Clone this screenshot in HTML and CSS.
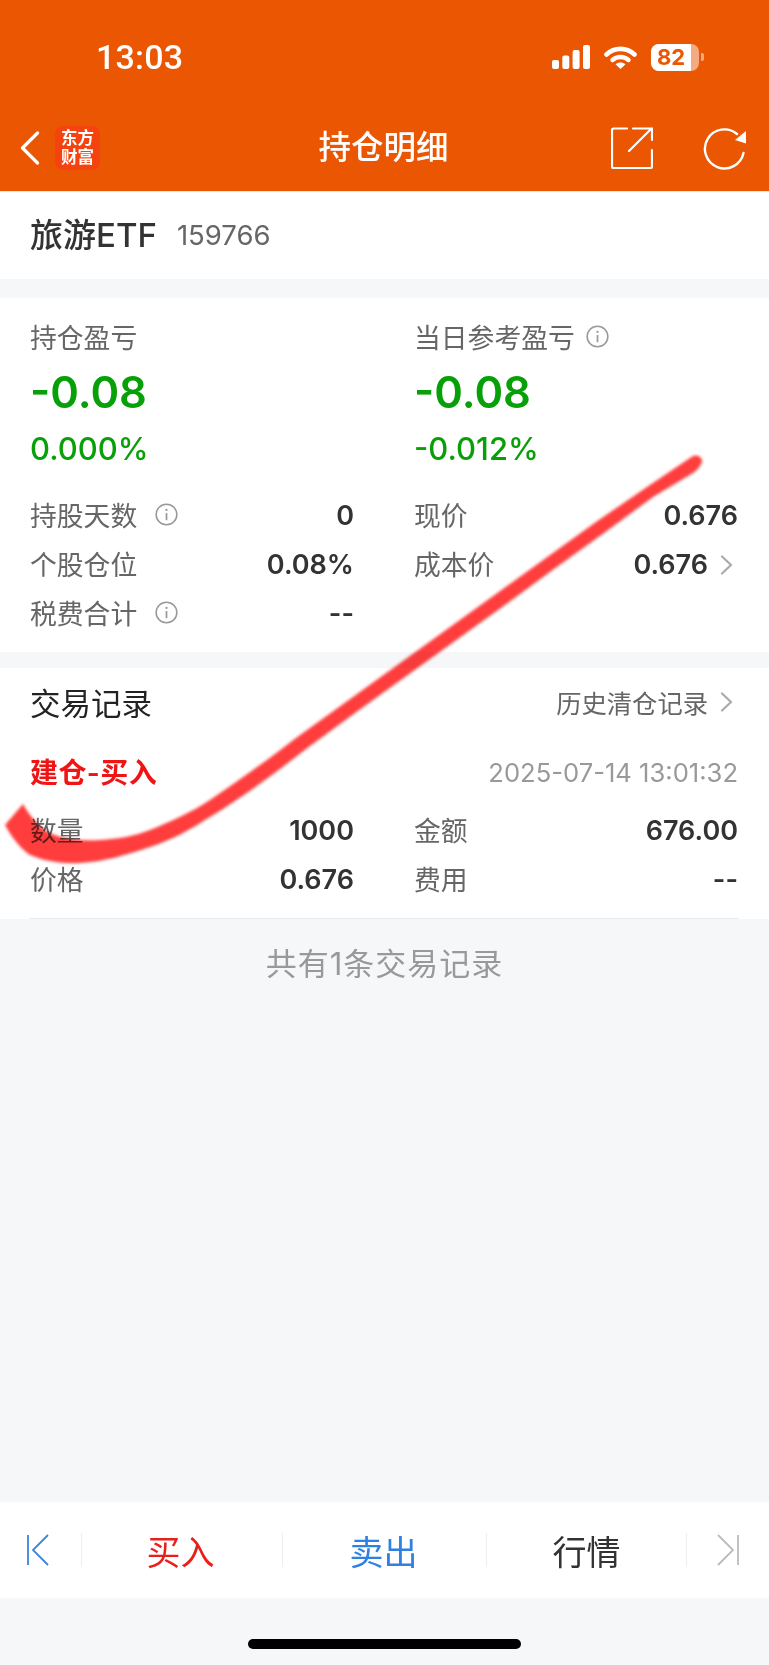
FILE: index.html
```html
<!DOCTYPE html>
<html lang="zh-CN">
<head>
    <meta charset="UTF-8">
    <meta name="viewport" content="width=device-width, initial-scale=1.0">
    <link rel="stylesheet" href="styles.css">
    <title>持仓明细</title>
</head>
<body>
    <svg class="defs" width="0" height="0">
        <symbol id="info" viewBox="0 0 24 24">
            <circle cx="12" cy="12" r="10.8" fill="none" stroke="#999" stroke-width="1.6"/>
            <circle cx="12" cy="7.2" r="1.2" fill="#999"/>
            <path d="M12 10.5V18" stroke="#999" stroke-width="1.8" fill="none"/>
        </symbol>
        <symbol id="chevron" viewBox="0 0 13 20">
            <path d="M2 1.5L11 10L2 18.5" stroke="#aaa" stroke-width="2.2" fill="none" stroke-linecap="round" stroke-linejoin="round"/>
        </symbol>
    </svg>

    <div class="page">
        <header class="top">
            <div class="status">
                <span class="time">13:03</span>
                <div class="status-icons">
                    <svg class="signal" width="38" height="24" viewBox="0 0 38 24">
                        <rect x="0" y="15" width="7" height="9" rx="2" fill="#fff"/>
                        <rect x="10.3" y="10.5" width="7" height="13.5" rx="2" fill="#fff"/>
                        <rect x="20.6" y="5" width="7" height="19" rx="2" fill="#fff"/>
                        <rect x="31" y="0" width="7" height="24" rx="2" fill="#fff"/>
                    </svg>
                    <svg class="wifi" width="33" height="23" viewBox="0 0 33 23">
                        <path d="M2.5 8.5C10.5 1 22.5 1 30.5 8.5" stroke="#fff" stroke-width="4.6" fill="none" stroke-linecap="round"/>
                        <path d="M8.5 14C13 10 20 10 24.5 14" stroke="#fff" stroke-width="4.4" fill="none" stroke-linecap="round"/>
                        <path d="M11.5 18.2C14.5 15.8 18.5 15.8 21.5 18.2L16.5 23Z" fill="#fff"/>
                    </svg>
                    <div class="battery">
                        <div class="battery-body">
                            <div class="battery-fill"></div>
                            <span class="battery-num">82</span>
                        </div>
                        <div class="battery-nub"></div>
                    </div>
                </div>
            </div>
            <nav class="nav">
                <div class="nav-left">
                    <svg class="back" width="20" height="34" viewBox="0 0 20 34">
                        <path d="M17.5 2L2.5 17L17.5 32" stroke="#fff" stroke-width="3.2" fill="none" stroke-linecap="round" stroke-linejoin="round"/>
                    </svg>
                    <div class="logo">东方<br>财富</div>
                </div>
                <h1 class="title">持仓明细</h1>
                <div class="nav-right">
                    <svg width="42" height="42" viewBox="0 0 42 42">
                        <path d="M16 1.5H2.5Q1 1.5 1 3V39.5Q1 41 2.5 41H39.5Q41 41 41 39.5V23" stroke="#fff" stroke-width="2.2" fill="none" stroke-linecap="round"/>
                        <path d="M18 24L40 2M22 1.5H41V13" stroke="#fff" stroke-width="2.2" fill="none" stroke-linecap="round"/>
                    </svg>
                    <svg width="44" height="44" viewBox="0 0 44 44">
                        <path d="M34 8A19.5 19.5 0 1 0 40.5 27" stroke="#fff" stroke-width="2.4" fill="none" stroke-linecap="round"/>
                        <path d="M43 5V17.5L32 14Z" fill="#fff"/>
                    </svg>
                </div>
            </nav>
        </header>

        <section class="stock">
            <span class="stock-name">旅游ETF</span>
            <span class="stock-code">159766</span>
        </section>

        <section class="card summary">
            <div class="pl-grid">
                <div class="pl">
                    <div class="pl-label">持仓盈亏</div>
                    <div class="pl-value">-0.08</div>
                    <div class="pl-pct">0.000%</div>
                </div>
                <div class="pl">
                    <div class="pl-label">当日参考盈亏<svg class="info info-head"><use href="#info"/></svg></div>
                    <div class="pl-value">-0.08</div>
                    <div class="pl-pct">-0.012%</div>
                </div>
            </div>
            <div class="rows">
                <div class="row"><span class="key">持股天数<svg class="info"><use href="#info"/></svg></span><span class="val">0</span></div>
                <div class="row"><span class="key">现价</span><span class="val">0.676</span></div>
                <div class="row"><span class="key">个股仓位</span><span class="val">0.08%</span></div>
                <div class="row"><span class="key">成本价</span><span class="val val-link">0.676<svg class="chevron"><use href="#chevron"/></svg></span></div>
                <div class="row"><span class="key">税费合计<svg class="info"><use href="#info"/></svg></span><span class="val">--</span></div>
            </div>
        </section>

        <section class="card trades">
            <div class="trades-head">
                <h2 class="trades-title">交易记录</h2>
                <span class="trades-link">历史清仓记录<svg class="chevron"><use href="#chevron"/></svg></span>
            </div>
            <div class="trade">
                <div class="trade-head">
                    <span class="trade-type">建仓-买入</span>
                    <span class="trade-time">2025-07-14 13:01:32</span>
                </div>
                <div class="rows">
                    <div class="row"><span class="key">数量</span><span class="val">1000</span></div>
                    <div class="row"><span class="key">金额</span><span class="val">676.00</span></div>
                    <div class="row"><span class="key">价格</span><span class="val">0.676</span></div>
                    <div class="row"><span class="key">费用</span><span class="val">--</span></div>
                </div>
            </div>
        </section>

        <p class="count">共有1条交易记录</p>

        <div class="actions">
            <div class="act act-edge">
                <svg width="22" height="32" viewBox="0 0 22 32">
                    <path d="M1 1V31M21 1L6 16L21 31" stroke="#3a86de" stroke-width="1.8" fill="none"/>
                </svg>
            </div>
            <div class="act act-buy">买入</div>
            <div class="act act-sell">卖出</div>
            <div class="act act-quote">行情</div>
            <div class="act act-edge act-last">
                <svg width="22" height="32" viewBox="0 0 22 32">
                    <path d="M21 1V31M1 1L16 16L1 31" stroke="#bbb" stroke-width="1.8" fill="none"/>
                </svg>
            </div>
        </div>

        <div class="home-bar"></div>

        <!-- red marker stroke drawn over the screenshot -->
        <svg class="marker" width="769" height="1665" viewBox="0 0 769 1665">
            <defs>
                <filter id="soft" x="-5%" y="-5%" width="110%" height="110%">
                    <feGaussianBlur stdDeviation="1.4"/>
                </filter>
            </defs>
            <path fill="#ff3c3c" filter="url(#soft)" d="M693 456C698 454 703 458 702 462C700 467 697 470 693 473L653 497L604 533L554 569L505 605L455 641L405 677L355 713L306 749C270 777 240 799 205 820C185 833 168 841 150 847C126 855 103 862 80 863C62 864 44 861 30 855C22 850 12 838 5 825L23 804C30 816 38 827 50 833C62 839 80 841 100 840C118 839 135 836 150 830C172 821 190 813 210 800C236 782 268 760 296 738L346 702L396 666L446 630L496 594L546 558L596 522L647 487Z"/>
        </svg>
    </div>
</body>
</html>
```

FILE: styles.css
```css
* {
    box-sizing: border-box;
}

body {
    margin: 0;
    font-family: Inter, "Noto Sans CJK SC", sans-serif;
    color: #333;
    background: #f6f7f9;
}

.defs {
    display: block;
    height: 0;
}

.page {
    position: relative;
    width: 769px;
    height: 1665px;
    overflow: hidden;
}

/* orange header */
.top {
    height: 191px;
    background: #eb5602;
    color: #fff;
}

.status {
    display: flex;
    justify-content: space-between;
    align-items: center;
    height: 114px;
    padding: 0 65px 0 96px;
}

.time {
    font-family: Roboto, sans-serif;
    font-size: 34px;
    font-weight: 500;
    letter-spacing: 0.2px;
}

.status-icons {
    display: flex;
    align-items: center;
    gap: 14px;
}

.battery {
    display: flex;
    align-items: center;
    gap: 2px;
}

.battery-body {
    position: relative;
    width: 48px;
    height: 27px;
    border-radius: 8px;
    background: rgba(255, 255, 255, 0.5);
    overflow: hidden;
}

.battery-fill {
    width: 40px;
    height: 100%;
    background: #fff;
}

.battery-num {
    position: absolute;
    left: 0;
    right: 8px;
    top: 0;
    line-height: 27px;
    text-align: center;
    font-size: 22px;
    font-weight: 700;
    color: #eb5602;
}

.battery-nub {
    width: 3px;
    height: 8px;
    border-radius: 0 2px 2px 0;
    background: rgba(255, 255, 255, 0.5);
}

.nav {
    display: flex;
    justify-content: space-between;
    align-items: center;
    height: 68px;
    padding: 0 22px 0 20px;
}

.nav-left {
    display: flex;
    align-items: center;
    gap: 15px;
    width: 150px;
}

.logo {
    width: 45px;
    height: 44px;
    border-radius: 8px;
    background: #f5420f;
    color: #fff;
    font-size: 16.5px;
    font-weight: 700;
    line-height: 19px;
    text-align: center;
    padding-top: 3px;
}

.title {
    margin: 0;
    font-size: 32.5px;
    font-weight: 500;
    line-height: 44px;
}

.nav-right {
    display: flex;
    justify-content: flex-end;
    align-items: center;
    gap: 50px;
    width: 150px;
}

/* stock name */
.stock {
    display: flex;
    align-items: center;
    gap: 20px;
    height: 88px;
    padding: 0 30px;
    background: #fff;
    border-top: 1px solid #e8e8e8;
}

.stock-name {
    padding-bottom: 6px;
    font-size: 33px;
    font-weight: 500;
    color: #333;
}

.stock-code {
    padding-bottom: 2px;
    font-size: 27.5px;
    color: #666;
}

.card {
    background: #fff;
}

.summary {
    height: 354px;
    margin-top: 19px;
    padding: 24px 31px 0 30px;
}

.pl-grid {
    display: grid;
    grid-template-columns: 324px 324px;
    column-gap: 60px;
}

.pl-label {
    display: flex;
    align-items: center;
    height: 32px;
    padding-bottom: 3px;
    font-size: 26.8px;
    color: #666;
}

.pl-value {
    margin-top: 15px;
    font-size: 43.5px;
    font-weight: 600;
    line-height: 46px;
    color: #08a008;
}

.pl-pct {
    margin-top: 18px;
    font-size: 31px;
    font-weight: 500;
    line-height: 32px;
    color: #08a008;
}

.rows {
    display: grid;
    grid-template-columns: 324px 324px;
    column-gap: 60px;
}

.summary .rows {
    margin-top: 26px;
}

.row {
    display: flex;
    justify-content: space-between;
    align-items: center;
    height: 49px;
}

.key {
    display: flex;
    align-items: center;
    padding-bottom: 3px;
    font-size: 26.8px;
    color: #666;
}

.val {
    display: flex;
    align-items: center;
    font-size: 27px;
    font-weight: 600;
    color: #333;
}

.info {
    width: 23px;
    height: 23px;
    margin-left: 18px;
}

.info-head {
    margin-left: 11px;
}

.chevron {
    width: 13px;
    height: 20px;
    margin-left: 12px;
}

.val-link {
    margin-right: 5px;
}

/* trades */
.trades {
    height: 251px;
    margin-top: 16px;
    padding: 0 31px 0 30px;
    position: relative;
}

.trades-head {
    display: flex;
    justify-content: space-between;
    align-items: center;
    height: 70px;
}

.trades-title {
    margin: 0;
    padding-bottom: 3px;
    font-size: 30.5px;
    font-weight: 400;
    color: #222;
}

.trades-link {
    display: flex;
    align-items: center;
    margin-right: 5px;
    padding-bottom: 3px;
    font-size: 25.3px;
    color: #666;
}

.trade {
    height: 181px;
    border-bottom: 1px solid #e9e9e9;
}

.trade-head {
    display: flex;
    justify-content: space-between;
    align-items: center;
    height: 68px;
}

.trade-type {
    padding-bottom: 3px;
    font-size: 28px;
    font-weight: 600;
    letter-spacing: 0.4px;
    color: #f01414;
}

.trade-time {
    font-size: 25.6px;
    color: #999;
}

.count {
    margin: 27px 0 0;
    font-size: 31px;
    letter-spacing: 1px;
    line-height: 36px;
    text-align: center;
    color: #999;
}

/* bottom buttons */
.actions {
    display: flex;
    align-items: center;
    height: 96px;
    margin-top: 520px;
    background: #fff;
}

.act {
    display: flex;
    justify-content: center;
    align-items: center;
    height: 34px;
    font-size: 34px;
    border-right: 1px solid #eee;
}

.act-edge {
    flex: 0 0 82px;
    justify-content: flex-start;
    padding-left: 27px;
}

.act-buy {
    flex: 0 0 201px;
    padding-right: 3px;
    color: #e8201c;
}

.act-sell {
    flex: 0 0 204px;
    padding-right: 2px;
    color: #2f80e0;
}

.act-quote {
    flex: 0 0 200px;
    color: #333;
}

.act-last {
    padding-left: 30px;
    border-right: none;
}

.home-bar {
    width: 273px;
    height: 10px;
    margin: 41px auto 0;
    border-radius: 5px;
    background: #000;
}

.marker {
    position: absolute;
    left: 0;
    top: 0;
    mix-blend-mode: multiply;
    pointer-events: none;
}
```
